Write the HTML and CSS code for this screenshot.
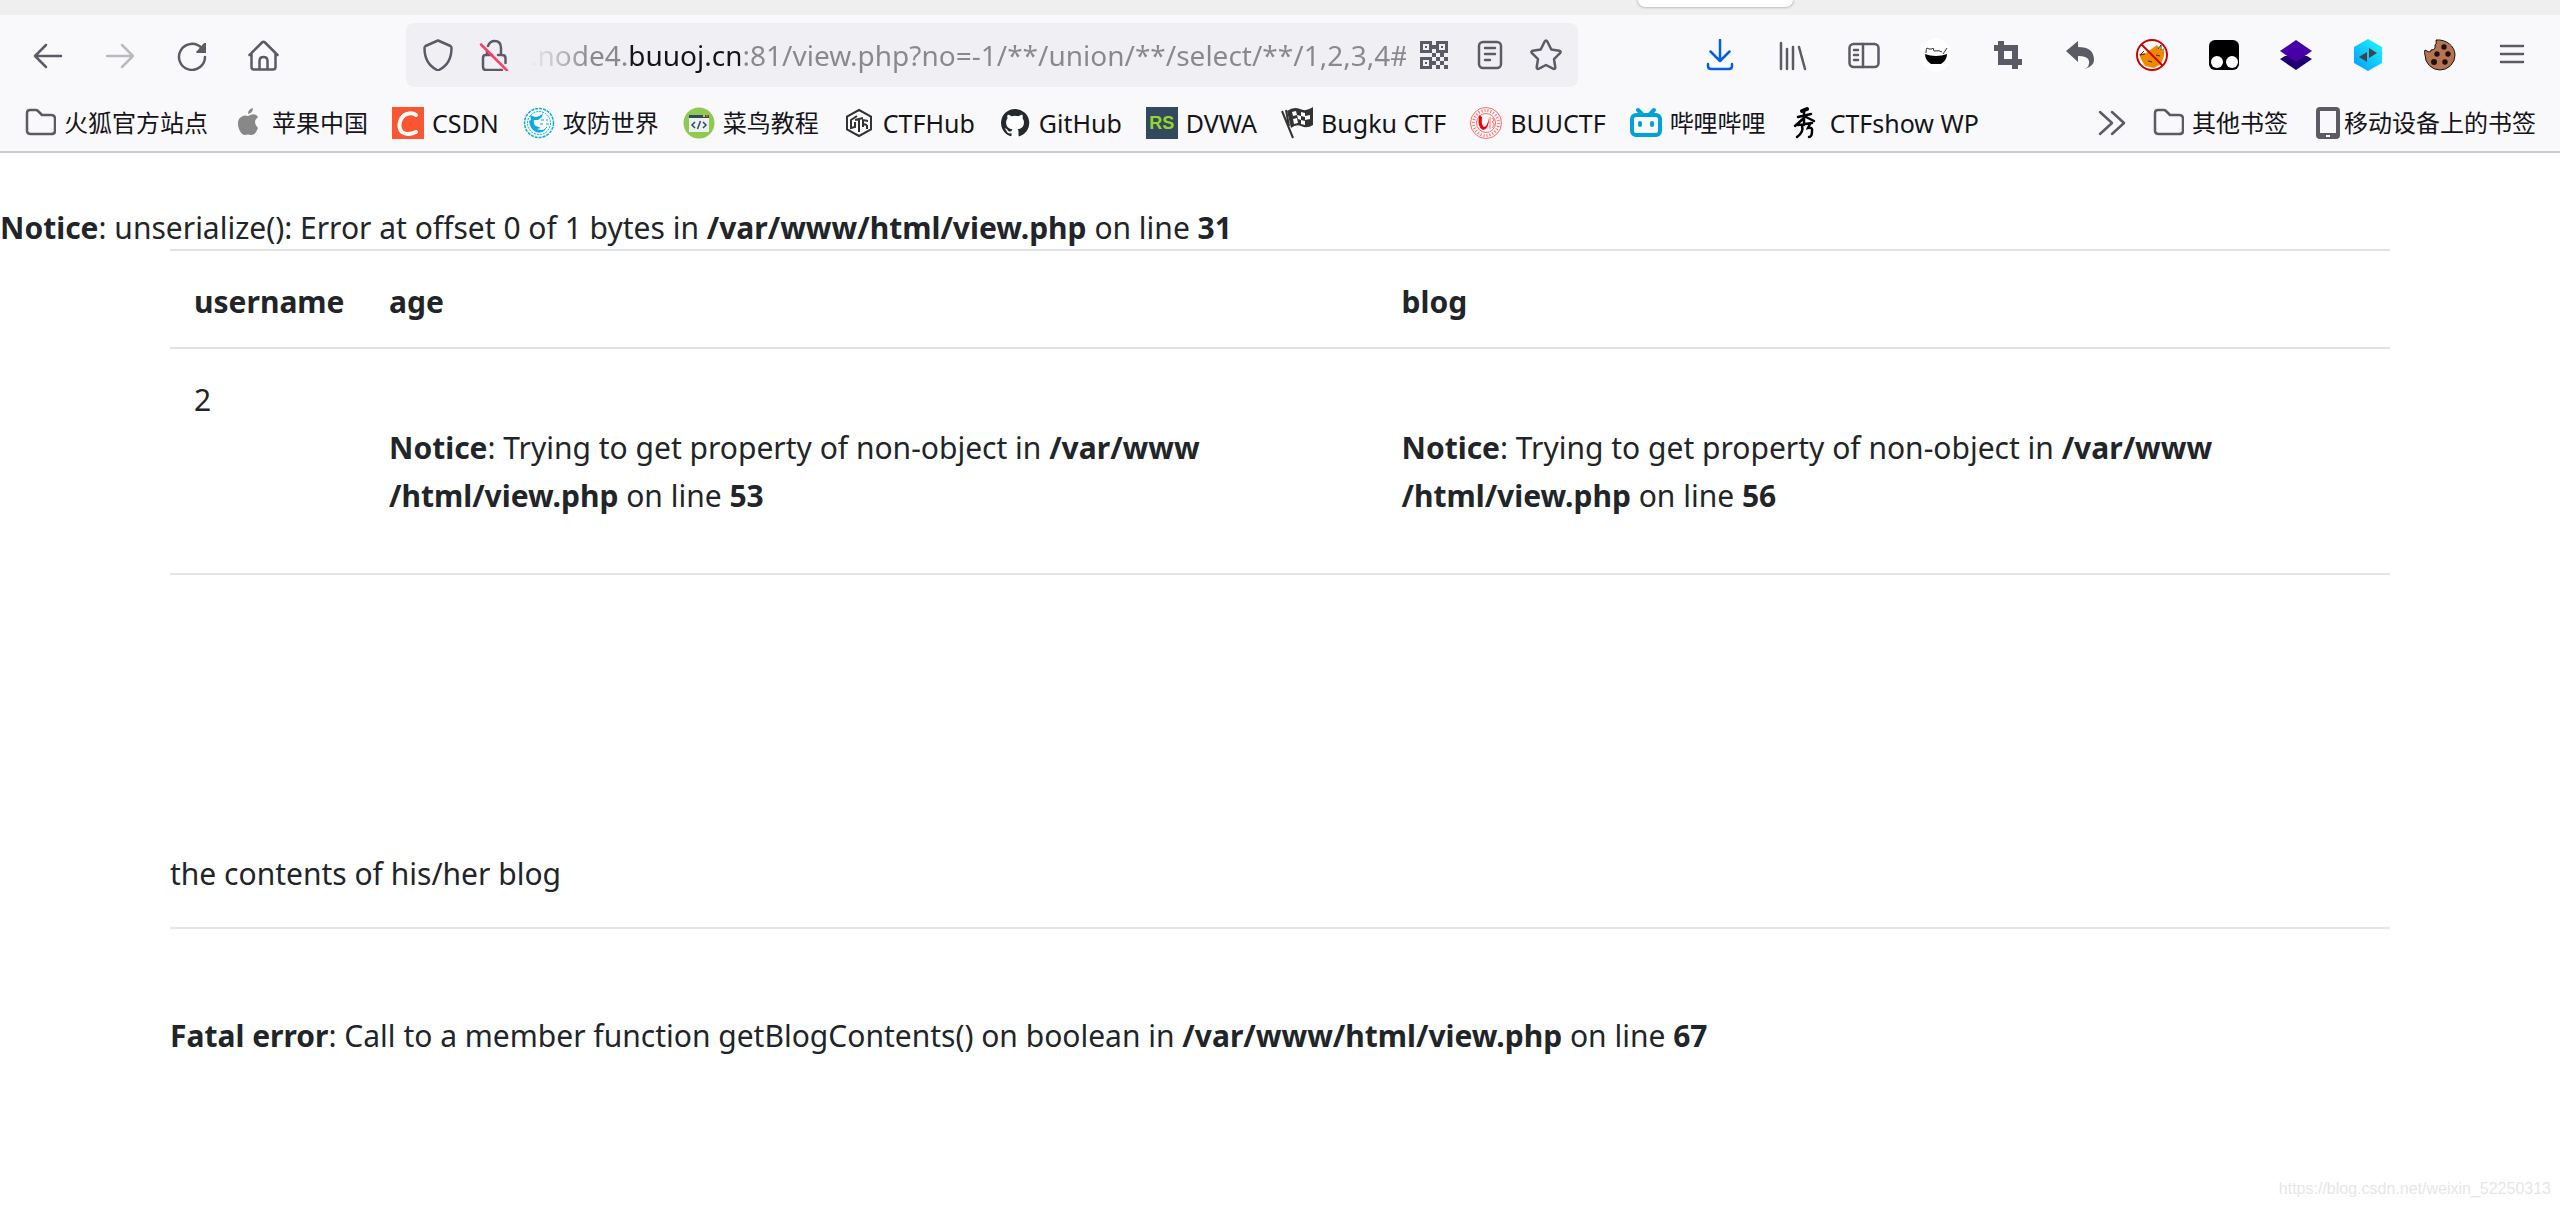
FILE: index.html
```html
<!DOCTYPE html>
<html lang="zh-CN">
<head>
<meta charset="utf-8">
<title>view.php</title>
<link rel="stylesheet" href="styles.css">
</head>
<body>
<header class="chrome">
  <div class="tab-strip"><div class="tab"></div></div>
  <div class="nav-bar">
    <button class="tool" type="button" aria-label="后退"><svg class="icon line" viewBox="0 0 32 32"><path d="M29 17H3M14 6 3 17l11 11"/></svg></button>
    <button class="tool" type="button" aria-label="前进" disabled><svg class="icon line" viewBox="0 0 32 32"><path d="M3 17h26M18 6l11 11-11 11"/></svg></button>
    <button class="tool" type="button" aria-label="刷新"><svg class="icon line" viewBox="0 0 32 32"><path d="M25.500 9A13 13 0 1 0 29 18"/><path class="solid" d="M30 4v10H21q-2-1 0-2l7-8z" stroke="none"/></svg></button>
    <button class="tool" type="button" aria-label="主页"><svg class="icon line" viewBox="0 0 32 32"><path d="M1.500 16 14 3.500q1.500-1.500 3 0L29.500 16M3.500 14v14q0 2.500 2.500 2.500h19q2.500 0 2.500-2.500V14M11.500 30v-8q0-4 4-4t4 4v8"/></svg></button>
    <div class="url-bar">
      <button class="url-tool" type="button" aria-label="跟踪保护"><svg class="icon line" viewBox="0 0 32 32"><path d="M16 1.500 28.500 7q1 .5 1 2C29.500 20 25 27 17 31q-1 .5-2 0C7 27 2.500 20 2.500 9q0-1.500 1-2z"/></svg></button>
      <button class="url-tool" type="button" aria-label="连接不安全"><svg class="icon line" viewBox="0 0 32 32"><path d="M10 7q2-5 6.500-5Q23 2 23 9v7M9 12v4M14 16H7.500Q5 16 5 19v9q0 3 3 3h16M20 16h4q3.500 0 3.500 3v5"/><path class="slash" d="M3 5.500 29 31.500"/></svg></button>
      <input class="url-input" type="text" aria-label="地址" value=".node4.buuoj.cn:81/view.php?no=-1/**/union/**/select/**/1,2,3,4#">
      <button class="url-tool" type="button" aria-label="二维码"><svg class="icon" viewBox="0 0 32 32" fill="currentColor"><path fill-rule="evenodd" d="M2 2h12v12H2zm3 3v6h6V5zM18 2h12v12H18zm3 3v6h6V5zM2 18h12v12H2zm3 3v6h6v-6zM7 7h2v2H7zM23 7h2v2h-2zM7 23h2v2H7zM14 6h4v4h-4zM14 14h4v4h-4zM18 18h4v4h-4zM22 14h4v4h-4zM26 18h4v4h-4zM22 22h4v4h-4zM14 22h4v4h-4zM18 26h4v4h-4zM26 26h4v4h-4z"/></svg></button>
      <button class="url-tool" type="button" aria-label="阅读模式"><svg class="icon line" viewBox="0 0 32 32"><rect x="5" y="3" width="22" height="26" rx="4"/><path d="M11 9h10M13 15h8M11 15h8M11 21h5"/></svg></button>
      <button class="url-tool" type="button" aria-label="收藏"><svg class="icon line" viewBox="0 0 32 32"><path d="M14.700 2.500q1.300-2 2.600 0l4 8 8 1.300q2.200.7.700 2.400l-6 6 1.300 8q0 2.500-2.300 1.500L16 26l-7 3.700q-2.300 1-2.300-1.500l1.300-8-6-6q-1.500-1.700.7-2.400l8-1.300z"/></svg></button>
    </div>
    <button class="tool download" type="button" aria-label="下载"><svg class="icon line" viewBox="0 0 32 32"><path d="M16 1v20M6.500 12.500 16 22l9.500-9.500M4 25v2q0 3 3 3h18q3 0 3-3v-2"/></svg></button>
    <button class="tool" type="button" aria-label="书库"><svg class="icon line" viewBox="0 0 32 32"><path d="M5 4v26M11 10v20M17 8v22M23 8l6 22"/></svg></button>
    <button class="tool" type="button" aria-label="侧栏"><svg class="icon line" viewBox="0 0 32 32"><rect x="1.500" y="5" width="29" height="23" rx="4"/><path d="M15 5v23M6 11h4M6 16h4M6 21h4"/></svg></button>
    <button class="tool" type="button" aria-label="搜索工具"><svg class="icon" viewBox="0 0 32 32"><circle cx="16" cy="16" r="16" fill="#fff"/><path d="M5 15q5 2 11 2t11-2q0 6-6 10H11Q5 21 5 15z" fill="#000"/><path d="M6 14q0-4 1-5l2 1h3l1-1 1 3q6-1 8 1M27 9l-4 6" fill="none" stroke="#333"/></svg></button>
    <button class="tool" type="button" aria-label="截图"><svg class="icon" viewBox="0 0 32 32" fill="currentColor"><path fill-rule="evenodd" d="M6 2h6v4h14v14h4v6h-4v4h-6v-4H6V12H2V6h4zm6 10v8h8v-8z"/></svg></button>
    <button class="tool" type="button" aria-label="撤销"><svg class="icon" viewBox="0 0 32 32" fill="currentColor"><path d="M2 12 14 2v6q16 0 16 13 0 6-9 9 5-3 4-8-1-5-11-5v6z"/></svg></button>
    <button class="tool" type="button" aria-label="FoxyProxy"><svg class="icon" viewBox="0 0 32 32"><circle cx="16" cy="16" r="15" fill="#fff"/><path d="M3 15l7-1 11-8 4 5 3-2v8l-3 8-7 4-9-2-4-7z" fill="#ef8a00"/><path d="M8 12l-4 4 5-1M22 10l3-4v5M12 22l4 1M20 16l4 1" stroke="#333" fill="none"/><circle cx="16" cy="16" r="15" fill="none" stroke="#cc0000" stroke-width="2"/><path d="M5.500 5.500l21 21" stroke="#cc0000" stroke-width="2"/></svg></button>
    <button class="tool" type="button" aria-label="Tampermonkey"><svg class="icon" viewBox="0 0 32 32"><rect x="1" y="1" width="30" height="30" rx="6"/><circle cx="9" cy="23" r="6" fill="#fff"/><circle cx="24" cy="23" r="6" fill="#fff"/></svg></button>
    <button class="tool" type="button" aria-label="图层"><svg class="icon" viewBox="0 0 32 32"><path d="M0 20 5 17h22l5 3-16 11z" fill="#1f0070"/><path d="M16 1 32 12 16 23 0 12z" fill="#4700a8"/></svg></button>
    <button class="tool" type="button" aria-label="HackBar"><svg class="icon" viewBox="0 0 32 32"><defs><linearGradient id="hex" x1="0" y1="1" x2="1" y2="0"><stop stop-color="#0098ff"/><stop offset="1" stop-color="#22fbff"/></linearGradient></defs><path d="M16 0 30 8v16L16 32 2 24V8z" fill="url(#hex)"/><path d="M15 13v10L7 18zM17 9v10l8-5z" fill="#444"/></svg></button>
    <button class="tool" type="button" aria-label="Cookie"><svg class="icon" viewBox="0 0 32 32"><path d="M12 1c10-1 19 6 19 15a15 15 0 0 1-30 0q-1-3 0-5l4 2q2 0 2-2 5 0 4-5 2-1 1-5z" fill="#b77452" stroke="#111"/><g fill="#1c1010"><circle cx="20" cy="8" r="2.700"/><circle cx="13" cy="15" r="2.700"/><circle cx="24" cy="15" r="2.700"/><circle cx="10" cy="23" r="3"/><circle cx="21" cy="23" r="2.700"/></g></svg></button>
    <button class="tool" type="button" aria-label="菜单"><svg class="icon line" viewBox="0 0 32 32"><path d="M5 7h22M5 15h22M5 23h22"/></svg></button>
  </div>
  <nav class="bookmarks" aria-label="书签">
    <a class="bookmark" href="#"><svg class="icon line" viewBox="0 0 32 32"><path d="M3 6q0-3 3-3h6q1 0 2 1l4 4h9q4 0 4 4v12q0 3-4 3H7q-4 0-4-3z"/></svg><span>火狐官方站点</span></a>
    <a class="bookmark" href="#"><svg class="icon" viewBox="0 0 32 32" fill="#888"><path d="M16 9q7-4 10 1-6 5 0 11-3 8-7 7-3-1-6 0C8 28 4 17 7 12q4-5 9-3zM16 7q0-5 5-6 0 5-5 6z"/></svg><span>苹果中国</span></a>
    <a class="bookmark" href="#"><svg class="icon" viewBox="0 0 32 32"><path fill="#fc5531" d="M0 0h32v32H0z"/><path d="M24 8Q20 5 15 7C8 9 5 20 10 25q5 4 14 0" fill="none" stroke="#fff" stroke-width="4" stroke-linecap="round"/></svg><span class="latin">CSDN</span></a>
    <a class="bookmark" href="#"><svg class="icon" viewBox="0 0 32 32" fill="none" stroke="#0cace2"><circle cx="16" cy="16" r="14.500" stroke-width="1.500" stroke-dasharray="3 1"/><circle cx="16" cy="16" r="11.500" stroke-dasharray="2 1"/><path d="M7 8l5 2q5 0 8-4l-1 4-4 3h-4q-1 4 2 6l5 2-4 1q4 2 9 0-4 5-10 3Q7 22 6 14l2-1z" fill="#0cace2" stroke="none"/><path d="M18 13h3M23 13h2M17 17h3M23 17h3M24 20l-3 3"/></svg><span>攻防世界</span></a>
    <a class="bookmark" href="#"><svg class="icon" viewBox="0 0 32 32"><circle cx="16" cy="16" r="15.500" fill="#8fca50"/><path fill="#ecf0f1" d="M6 8h20v17H6z"/><path fill="#2f4a60" d="M6 8h20v3H6z"/><path fill="#e0503c" d="M23 8h2v2h-2z"/><path fill="#f0c030" d="M20 8h2v2h-2z"/><path d="M12 15l-3 3 3 3M20 15l3 3-3 3M17.500 14l-3 8" fill="none" stroke="#2f4a60" stroke-width="1.500"/></svg><span>菜鸟教程</span></a>
    <a class="bookmark" href="#"><svg class="icon" viewBox="0 0 32 32" fill="none" stroke="#333" stroke-width="2"><path d="M16 3l12 6.500v13L16 29 4 22.500v-13z" fill="#fff"/><path d="M14 9l-6 4v8l4-1v-5M12 13l8-2M16 13v12M20 20v-7l5 1M20 17l4 1M24 18v4"/></svg><span class="latin">CTFHub</span></a>
    <a class="bookmark" href="#"><svg class="icon" viewBox="0 0 16 16" fill="#24292e"><circle cx="8" cy="8" r="7.500" fill="#fff"/><path transform="translate(1 1) scale(.875)" d="M8 0a8 8 0 0 0-2.530 15.590c.4.070.55-.17.55-.38v-1.340c-2.230.48-2.700-1.070-2.700-1.070-.36-.92-.89-1.170-.89-1.170-.73-.5.050-.49.050-.49.810.060 1.230.83 1.230.83.720 1.230 1.880.87 2.340.67.070-.52.280-.87.510-1.070-1.780-.2-3.640-.89-3.640-3.950 0-.87.310-1.590.82-2.150-.080-.2-.36-1.020.080-2.120 0 0 .67-.22 2.200.82a7.600 7.600 0 0 1 4 0c1.530-1.040 2.200-.82 2.200-.82.44 1.100.16 1.920.080 2.120.51.560.82 1.270.82 2.150 0 3.070-1.870 3.750-3.650 3.950.29.250.54.730.54 1.480v2.200c0 .21.150.46.550.38A8 8 0 0 0 8 0z"/></svg><span class="latin">GitHub</span></a>
    <a class="bookmark" href="#"><span class="icon rs">RS</span><span class="latin">DVWA</span></a>
    <a class="bookmark" href="#"><svg class="icon" viewBox="0 0 32 32"><path d="M1 4l11 27M5 3l3 16" stroke="#333" stroke-width="2"/><path d="M6 4q7-5 13-2 6 3 13-2v18q-6 4-12 1-5-2-10 2z" fill="#333"/><path fill="#fff" d="M11 5l4-1 1 4-4 1zM20 5l4 1v4l-4-1zM16 8l4 1v4l-3-1zM24 9l5-1v4l-5 1zM12 12l4-1 1 5-4 1zM20 13l4 1v4l-4-1z"/></svg><span class="latin">Bugku CTF</span></a>
    <a class="bookmark" href="#"><svg class="icon" viewBox="0 0 32 32" fill="none" stroke="#ff6b6b"><circle cx="16" cy="16" r="15.500"/><circle cx="16" cy="16" r="12.500" stroke-width="3" stroke-dasharray="1 2"/><circle cx="16" cy="16" r="9.500"/><path d="M9 8q-2 13 4 15 6-1 6-12-2 9-5 9-3-2-2-10z" fill="#f00000" stroke="none"/><path d="M20 10v12M22 11q4 2 0 4 4 2 0 6"/></svg><span class="latin">BUUCTF</span></a>
    <a class="bookmark" href="#"><svg class="icon" viewBox="0 0 32 32" fill="none" stroke="#00a1d6" stroke-width="4" stroke-linecap="round"><rect x="2" y="8" width="28" height="20" rx="4"/><path d="M8 3l4 4M24 3l-4 4M10 16v2M22 16v2"/></svg><span>哔哩哔哩</span></a>
    <a class="bookmark" href="#"><svg class="icon" viewBox="0 0 32 32" fill="none" stroke="#000" stroke-width="2.500" stroke-linecap="round"><path stroke-width="4" d="M12 4l5-2"/><path d="M8 10l13-3M14 4v14M15 10l-10 9M16 10l8 4M8 18l14-2M12 19q2 6-5 11M20 17l-2 4q5-1 4 3 0 6-3 6"/></svg><span class="latin">CTFshow WP</span></a>
    <button class="overflow" type="button" aria-label="更多书签"><svg class="icon line" viewBox="0 0 32 32"><path d="M4 5l12 11L4 27M16 5l12 11-12 11"/></svg></button>
    <a class="bookmark" href="#"><svg class="icon line" viewBox="0 0 32 32"><path d="M3 6q0-3 3-3h6q1 0 2 1l4 4h9q4 0 4 4v12q0 3-4 3H7q-4 0-4-3z"/></svg><span>其他书签</span></a>
    <a class="bookmark mobile" href="#"><svg class="icon" viewBox="0 0 32 32"><path fill="#5b5b66" fill-rule="evenodd" d="M8 0h16q4 0 4 4v24q0 4-4 4H8q-4 0-4-4V4q0-4 4-4zm0 4v22h16V4zm6 24v2h4v-2z"/></svg><span>移动设备上的书签</span></a>
  </nav>
</header>
<main class="page">
  <p class="message"><b>Notice</b>: unserialize(): Error at offset 0 of 1 bytes in <b>/var/www/html/view.php</b> on line <b>31</b></p>
  <div class="container">
    <table class="profile">
      <thead><tr><th class="name">username</th><th>age</th><th>blog</th></tr></thead>
      <tbody><tr>
        <td>2</td>
        <td><p class="message"><b>Notice</b>: Trying to get property of non-object in <b>/var/www<br>/html/view.php</b> on line <b>53</b></p></td>
        <td><p class="message"><b>Notice</b>: Trying to get property of non-object in <b>/var/www<br>/html/view.php</b> on line <b>56</b></p></td>
      </tr></tbody>
    </table>
    <hr class="rule">
    <p class="contents">the contents of his/her blog</p>
    <hr class="rule">
    <p class="message"><b>Fatal error</b>: Call to a member function getBlogContents() on boolean in <b>/var/www/html/view.php</b> on line <b>67</b></p>
  </div>
</main>
<footer class="watermark">https://blog.csdn.net/weixin_52250313</footer>
</body>
</html>
```
FILE: styles.css
```css
* { box-sizing: border-box; }

body {
  margin: 0;
  min-height: 100vh;
  display: flex;
  flex-direction: column;
  background: #fff;
  color: #212529;
  font: 30px/48px "Noto Sans", "Noto Sans CJK SC", sans-serif;
}

button { margin: 0; padding: 0; border: 0; background: none; color: inherit; }
p { margin: 0; }

.chrome {
  background: #f9f9fb;
  border-bottom: 2px solid #ccc;
  color: #5b5b66;
}

.tab-strip {
  height: 15px;
  padding-left: 64%;
  background: #efefef;
}

.tab {
  width: 155px;
  height: 7px;
  background: #fff;
  border-radius: 0 0 8px 8px;
  box-shadow: 0 0 3px #889;
  clip-path: inset(0 -4px -4px -4px);
}

.icon { display: block; flex: none; width: 32px; height: 32px; }
.line { fill: none; stroke: currentColor; stroke-width: 2.5; stroke-linecap: round; stroke-linejoin: round; }
.solid { fill: currentColor; }
.slash { stroke: #ff3b6b; }

.nav-bar {
  display: flex;
  align-items: center;
  padding: 8px 12px;
}

.tool { display: grid; place-items: center; flex: none; width: 72px; height: 64px; }
.tool:disabled { opacity: .4; }
.download { color: #0060df; }

.url-bar {
  flex: 1;
  min-width: 0;
  display: flex;
  align-items: center;
  height: 64px;
  margin: 0 106px;
  padding: 0 4px;
  border-radius: 8px;
  background: #f0f0f4;
}

.url-tool { display: grid; place-items: center; flex: none; width: 56px; height: 56px; }

/* The host name is dark, the rest of the address is grey and fades in from the left. */
.url-input {
  flex: 1;
  min-width: 0;
  height: 56px;
  margin-left: 8px;
  padding: 0;
  border: 0;
  outline: 0;
  background: linear-gradient(90deg, transparent 0, #88888d 60px, #88888d 96px, #15141a 96px, #15141a 210px, #88888d 210px);
  background-clip: text;
  color: transparent;
  font: 28px/56px "Noto Sans", sans-serif;
}

.bookmarks {
  display: flex;
  align-items: center;
  gap: 24px;
  height: 56px;
  padding: 0 24px;
  font-size: 24px;
  line-height: 32px;
}

.bookmark {
  display: flex;
  align-items: center;
  gap: 8px;
  color: #15141a;
  text-decoration: none;
  white-space: nowrap;
}
.bookmark .line { color: #5b5b66; }
.latin { font-size: 25px; }
.mobile { gap: 0; }
.overflow { margin-left: auto; }

.rs {
  background: #34495e;
  color: #95d62b;
  font: bold 18px/32px "Liberation Sans", sans-serif;
  text-align: center;
}

.page { padding-top: 3px; }
.message { padding-top: 48px; }

.container {
  max-width: 2280px;
  margin: 0 auto;
  padding: 0 30px;
}

.profile {
  width: 100%;
  margin: -3px 0 32px;
  table-layout: fixed;
  border-collapse: collapse;
}
.profile th, .profile td {
  padding: 27px 24px 21px;
  border-top: 2px solid #dee2e6;
  text-align: left;
  vertical-align: top;
}
.profile .name { width: 195px; }

.rule { margin: 29px 0 35px; border: 0; border-top: 2px solid #e5e5e5; }
.contents { padding-top: 240px; }

.watermark {
  margin-top: auto;
  padding: 0 9px 5px;
  color: #e6e6e6;
  font: 16px/24px "Liberation Sans", sans-serif;
  text-align: right;
}
```
